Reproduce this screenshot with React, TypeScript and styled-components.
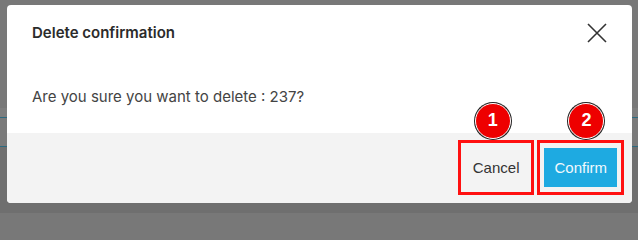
import styled, { createGlobalStyle } from 'styled-components';

const GlobalStyle = createGlobalStyle`
  html, body {
    margin: 0;
    padding: 0;
  }
  body {
    width: 638px;
    height: 213px;
    overflow: hidden;
    background: linear-gradient(
      to bottom,
      #787878 0,
      #787878 108px,
      #7e7e7e 108px,
      #7e7e7e 117px,
      #2c6a80 117px,
      #2c6a80 118px,
      #7a7a7a 118px,
      #7a7a7a 146px,
      #2c6a80 146px,
      #2c6a80 147px,
      #6f6f6f 147px
    );
  }
`;

export default function App() {
  return (
    <>
      <GlobalStyle />
      <Overlay>
        <Modal>
          <Header>
            <Title>Delete confirmation</Title>
            <CloseButton aria-label="Close">
              <svg width="20" height="20" viewBox="0 0 20 20">
                <path d="M1 1 L19 19 M19 1 L1 19" stroke="#333" strokeWidth="1.6" fill="none" />
              </svg>
            </CloseButton>
          </Header>
          <Body>Are you sure you want to delete : 237?</Body>
          <Footer>
            <Marked>
              <Badge $left={14}>1</Badge>
              <Button $variant="plain">Cancel</Button>
            </Marked>
            <Marked>
              <Badge $left={28}>2</Badge>
              <Button $variant="primary">Confirm</Button>
            </Marked>
          </Footer>
        </Modal>
      </Overlay>
    </>
  );
}

const Overlay = styled.div`
  padding: 5px 6px 0 7px;
`;

const Modal = styled.div`
  width: 625px;
  height: 198px;
  display: flex;
  flex-direction: column;
  background: #fff;
  border-radius: 4px;
  overflow: hidden;
`;

const Header = styled.div`
  height: 55px;
  display: flex;
  align-items: center;
  justify-content: space-between;
  padding: 0 25px;
  box-sizing: border-box;
`;

const Title = styled.h3`
  margin: 0;
  font-family: Inter, 'Noto Sans', sans-serif;
  font-size: 15px;
  font-weight: 600;
  color: #2b2b2b;
`;

const CloseButton = styled.button`
  width: 20px;
  height: 20px;
  padding: 0;
  border: none;
  background: none;
  display: flex;
`;

const Body = styled.div`
  height: 73px;
  display: flex;
  align-items: center;
  padding: 0 25px;
  font-family: Inter, 'Noto Sans', sans-serif;
  font-size: 15px;
  color: #444;
`;

const Footer = styled.div`
  flex: 1;
  display: flex;
  align-items: center;
  justify-content: flex-end;
  gap: 3px;
  padding: 0 8px 2px 0;
  background: #f3f3f3;
`;

const Marked = styled.div`
  position: relative;
  display: flex;
  padding: 5px 4px;
  border: 3px solid #ff1010;
`;

const Badge = styled.div<{ $left: number }>`
  position: absolute;
  left: ${(p) => p.$left}px;
  top: -40px;
  width: 34px;
  height: 34px;
  border-radius: 50%;
  background: #ee0000;
  border: 1.5px solid #fff;
  box-shadow: 0 0 0 1px #222;
  display: flex;
  align-items: center;
  justify-content: center;
  color: #fff;
  font-family: 'Liberation Sans', Arial, sans-serif;
  font-weight: 700;
  font-size: 18px;
`;

const Button = styled.button<{ $variant: 'plain' | 'primary' }>`
  height: 39px;
  padding: 0 ${(p) => (p.$variant === 'primary' ? '10px' : '8px')};
  border: none;
  border-radius: 0;
  font-family: 'Liberation Sans', Arial, sans-serif;
  font-size: 15px;
  background: ${(p) => (p.$variant === 'primary' ? '#1eaae1' : 'transparent')};
  color: ${(p) => (p.$variant === 'primary' ? '#f2f9fd' : '#333')};
`;
